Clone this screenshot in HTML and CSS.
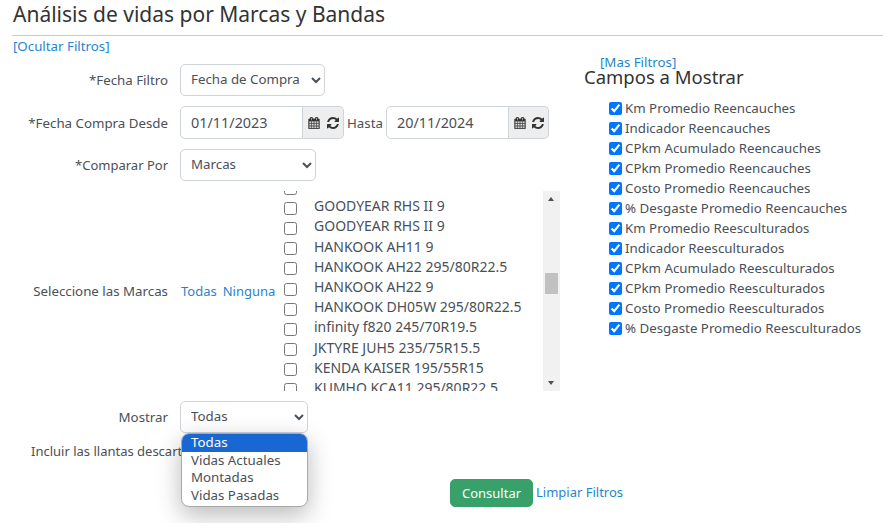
FILE: index.html
```html
<!DOCTYPE html>
<html lang="es">
<head>
<meta charset="utf-8">
<title>Análisis de vidas</title>
<link rel="stylesheet" href="styles.css">
</head>
<body>
<svg class="defs" width="0" height="0" aria-hidden="true">
  <symbol id="cal" viewBox="0 0 1664 1792"><path d="M128 1664h288v-288h-288v288zm352 0h320v-288h-320v288zm-352-352h288v-320h-288v320zm352 0h320v-320h-320v320zm-352-384h288v-288h-288v288zm736 736h320v-288h-320v288zm-384-736h320v-288h-320v288zm768 736h288v-288h-288v288zm-384-352h320v-320h-320v320zm-352-864v-288q0-13-9.5-22.5t-22.5-9.5h-64q-13 0-22.5 9.5t-9.5 22.5v288q0 13 9.5 22.5t22.5 9.5h64q13 0 22.5-9.5t9.5-22.5zm736 864h288v-320h-288v320zm-384-384h320v-288h-320v288zm384 0h288v-288h-288v288zm32-480v-288q0-13-9.5-22.5t-22.5-9.5h-64q-13 0-22.5 9.5t-9.5 22.5v288q0 13 9.5 22.5t22.5 9.5h64q13 0 22.5-9.5t9.5-22.5zm384-64v1280q0 52-38 90t-90 38h-1408q-52 0-90-38t-38-90v-1280q0-52 38-90t90-38h128v-96q0-66 47-113t113-47h64q66 0 113 47t47 113v96h384v-96q0-66 47-113t113-47h64q66 0 113 47t47 113v96h128q52 0 90 38t38 90z"/></symbol>
  <symbol id="ref" viewBox="128 128 1536 1536"><path d="M1639 1056q0 5-1 7-64 268-268 434.5t-478 166.5q-146 0-282.5-55t-243.5-157l-129 129q-19 19-45 19t-45-19-19-45v-448q0-26 19-45t45-19h448q26 0 45 19t19 45-19 45l-137 137q71 66 161 102t187 36q134 0 250-65t186-179q11-17 53-117 8-23 30-23h192q13 0 22.5 9.5t9.5 22.5zm25-800v448q0 26-19 45t-45 19h-448q-26 0-45-19t-19-45 19-45l138-138q-148-137-349-137-134 0-250 65t-186 179q-11 17-53 117-8 23-30 23h-199q-13 0-22.5-9.5t-9.5-22.5v-7q65-268 270-434.5t480-166.5q146 0 284 55.5t245 156.5l130-129q19-19 45-19t45 19 19 45z"/></symbol>
</svg>
<h1 class="title">Análisis de vidas por Marcas y Bandas</h1>
<hr class="rule">
<div class="toggle"><a href="#">[Ocultar Filtros]</a></div>
<div class="layout">
  <form class="filters">
    <div class="row">
      <label class="lbl">*Fecha Filtro</label>
      <select class="sel sel-a"><option>Fecha de Compra</option></select>
    </div>
    <div class="row">
      <label class="lbl">*Fecha Compra Desde</label>
      <div class="dates">
        <div class="group">
          <input class="date" value="01/11/2023">
          <span class="addon"><svg class="ic ic-cal"><use href="#cal"/></svg><svg class="ic"><use href="#ref"/></svg></span>
        </div>
        <span class="hasta">Hasta</span>
        <div class="group">
          <input class="date" value="20/11/2024">
          <span class="addon addon-end"><svg class="ic ic-cal"><use href="#cal"/></svg><svg class="ic"><use href="#ref"/></svg></span>
        </div>
      </div>
    </div>
    <div class="row">
      <label class="lbl lbl-small">*Comparar Por</label>
      <select class="sel sel-b"><option>Marcas</option></select>
    </div>
    <div class="row">
      <label class="lbl">Seleccione las Marcas</label>
      <div class="picker">
        <div class="links"><a href="#">Todas</a><a href="#">Ninguna</a></div>
        <div class="listbox">
          <ul class="brands">
            <li><input type="checkbox"><span>GOODYEAR RHD II 295/80R22.5</span></li>
            <li><input type="checkbox"><span>GOODYEAR RHS II 9</span></li>
            <li><input type="checkbox"><span>GOODYEAR RHS II 9</span></li>
            <li><input type="checkbox"><span>HANKOOK AH11 9</span></li>
            <li><input type="checkbox"><span>HANKOOK AH22 295/80R22.5</span></li>
            <li><input type="checkbox"><span>HANKOOK AH22 9</span></li>
            <li><input type="checkbox"><span>HANKOOK DH05W 295/80R22.5</span></li>
            <li><input type="checkbox"><span>infinity f820 245/70R19.5</span></li>
            <li><input type="checkbox"><span>JKTYRE JUH5 235/75R15.5</span></li>
            <li><input type="checkbox"><span>KENDA KAISER 195/55R15</span></li>
            <li><input type="checkbox"><span>KUMHO KCA11 295/80R22.5</span></li>
          </ul>
          <div class="scrollbar">
            <span class="arrow up"></span>
            <span class="track"><span class="thumb"></span></span>
            <span class="arrow down"></span>
          </div>
        </div>
      </div>
    </div>
    <div class="row row-show">
      <label class="lbl">Mostrar</label>
      <div class="show">
        <select class="sel sel-c"><option>Todas</option></select>
        <ul class="popup">
          <li class="on">Todas</li>
          <li>Vidas Actuales</li>
          <li>Montadas</li>
          <li>Vidas Pasadas</li>
        </ul>
      </div>
    </div>
    <div class="discard">Incluir las llantas descartadas</div>
    <div class="actions">
      <button type="button" class="btn">Consultar</button>
      <a href="#" class="clear">Limpiar Filtros</a>
    </div>
  </form>
  <aside class="fields">
    <a href="#" class="more">[Mas Filtros]</a>
    <h2 class="sub">Campos a Mostrar</h2>
    <ul class="checks">
      <li><input type="checkbox" checked><span>Km Promedio Reencauches</span></li>
      <li><input type="checkbox" checked><span>Indicador Reencauches</span></li>
      <li><input type="checkbox" checked><span>CPkm Acumulado Reencauches</span></li>
      <li><input type="checkbox" checked><span>CPkm Promedio Reencauches</span></li>
      <li><input type="checkbox" checked><span>Costo Promedio Reencauches</span></li>
      <li><input type="checkbox" checked><span>% Desgaste Promedio Reencauches</span></li>
      <li><input type="checkbox" checked><span>Km Promedio Reesculturados</span></li>
      <li><input type="checkbox" checked><span>Indicador Reesculturados</span></li>
      <li><input type="checkbox" checked><span>CPkm Acumulado Reesculturados</span></li>
      <li><input type="checkbox" checked><span>CPkm Promedio Reesculturados</span></li>
      <li><input type="checkbox" checked><span>Costo Promedio Reesculturados</span></li>
      <li><input type="checkbox" checked><span>% Desgaste Promedio Reesculturados</span></li>
    </ul>
  </aside>
</div>
</body>
</html>
```
FILE: styles.css
```css
* { box-sizing: border-box; }
html, body { margin: 0; height: 523px; overflow: hidden; }
body {
  background: #fff;
  color: #4a5058;
  font: 13.3px/20px "Noto Sans", sans-serif;
}
a { color: #1f85cf; text-decoration: none; }
ul { list-style: none; margin: 0; padding: 0; }
.defs { position: absolute; }

.title {
  margin: 0;
  padding: 1px 0 0 13px;
  height: 35px;
  font: 400 21px/26px "Noto Sans", sans-serif;
  color: #333;
}
.rule { margin: 0 0 0 12px; border: 0; border-top: 1px solid #ccc; }
.toggle { padding: 0 0 0 13px; height: 20px; line-height: 20px; }

.layout { display: flex; }
.filters { width: 584px; padding-top: 8px; flex: none; }
.row {
  display: grid;
  grid-template-columns: 168px auto;
  column-gap: 12px;
  align-items: center;
  justify-content: start;
  margin-bottom: 10px;
}
.lbl { text-align: right; white-space: nowrap; }
.lbl-small { font-size: 13px; }
.sel {
  height: 32px;
  padding: 0 6px 2px;
  background: #fff;
  border: 1px solid #ced4da;
  border-radius: 5px;
  color: #4a5058;
  font: inherit;
}
.sel-a { width: 145px; }
.sel-b { width: 136px; }
.sel-c { width: 128px; display: block; }

.dates { display: flex; align-items: center; }
.group { display: flex; height: 33px; }
.date {
  width: 123px;
  padding: 0 10px;
  border: 1px solid #ced4da;
  border-radius: 5px 0 0 5px;
  color: #4a5058;
  font: inherit;
  font-size: 14.4px;
}
.addon {
  display: flex;
  align-items: center;
  gap: 7px;
  width: 41px;
  padding-left: 5px;
  background: #eee;
  border: 1px solid #ced4da;
  border-left: 0;
  border-radius: 0 5px 5px 0;
}
.addon-end { width: 40px; gap: 6px; }
.ic { width: 12px; height: 12px; fill: #333; flex: none; }
.ic-cal { stroke: #333; stroke-width: 40; }
.hasta { width: 42px; text-align: center; }

.picker { display: flex; align-items: center; }
.links { display: flex; gap: 6px; width: 104px; padding-left: 1px; font-size: 13px; }
.listbox { display: flex; width: 276px; height: 200px; overflow: hidden; }
.brands { width: 259px; margin-top: -15px; font-size: 14px; }
.brands li { display: flex; align-items: center; height: 20.2px; white-space: nowrap; }
.brands input { margin: 4px 17px 0 0; flex: none; }
.scrollbar {
  display: flex;
  flex-direction: column;
  width: 17px;
  background: #f1f1f1;
}
.track { flex: 1; padding: 65px 2px 0; }
.thumb { display: block; height: 21px; background: #c1c1c1; }
.arrow { height: 17px; position: relative; }
.arrow::after {
  content: "";
  position: absolute;
  left: 5px;
  border: 3.5px solid transparent;
}
.up::after { top: 3px; border-bottom: 4px solid #505050; }
.down::after { bottom: 3px; border-top: 4px solid #505050; }

.row-show { margin-bottom: 8px; }
.show { position: relative; }
.popup {
  position: absolute;
  top: 32px;
  left: 1px;
  width: 127px;
  height: 74px;
  background: #fff;
  border: 1px solid #a9a9a9;
  border-radius: 8px;
  overflow: hidden;
  box-shadow: 0 8px 24px rgba(0, 0, 0, .28);
  z-index: 2;
}
.popup li { height: 17.7px; line-height: 17px; padding-left: 9px; }
.popup .on { background: #1967d2; color: #fff; }

.discard { padding-left: 31px; height: 20px; white-space: nowrap; font-size: 13px; }
.actions { display: flex; align-items: center; padding: 18px 0 0 450px; gap: 3px; white-space: nowrap; font-size: 13px; }
.btn {
  flex: none;
  width: 83px;
  height: 28px;
  padding: 0;
  background: #38a169;
  border: 1px solid #38a169;
  border-radius: 5px;
  color: #fff;
  font: inherit;
}
.clear { flex: none; margin-top: -2px; }

.more { display: block; height: 12px; margin-left: 16px; line-height: 12px; }
.sub {
  margin: -2px 0 0;
  height: 22px;
  font: 400 18.5px/22px "Noto Sans", sans-serif;
  color: #333;
}
.checks { margin: 10px 0 0 25px; }
.checks li { display: flex; align-items: center; height: 20px; white-space: nowrap; }
.checks input { margin: 0 3px 0 0; flex: none; }
```
